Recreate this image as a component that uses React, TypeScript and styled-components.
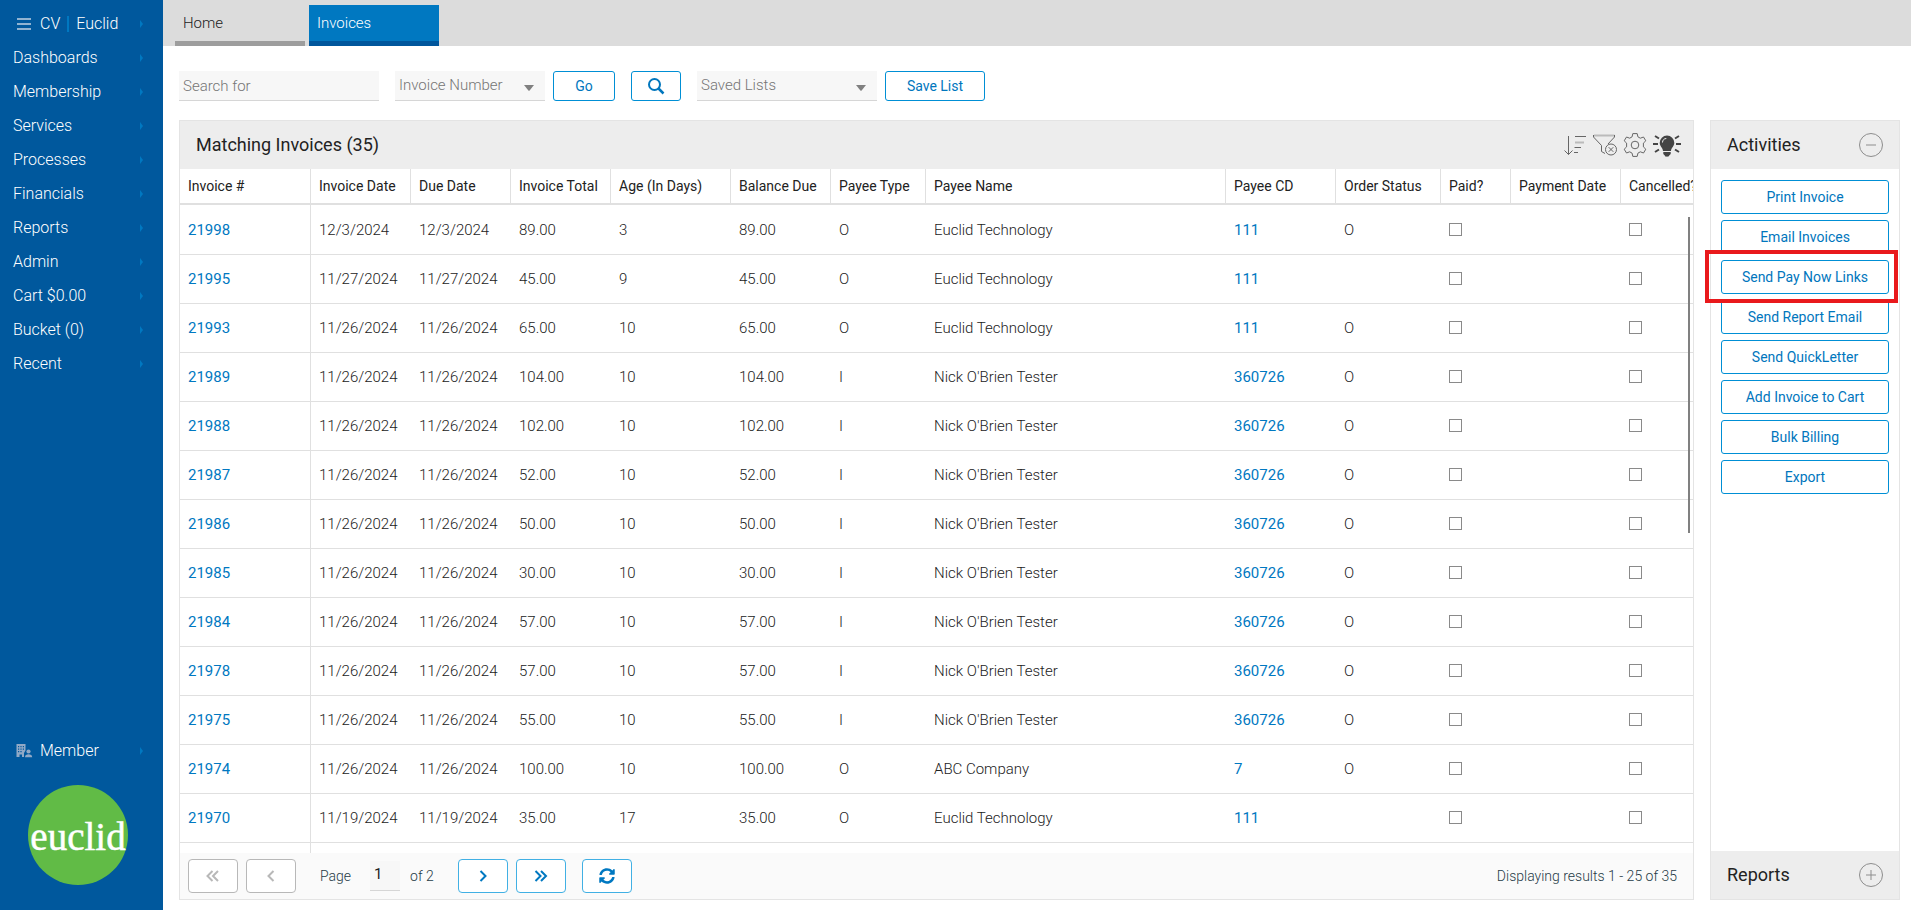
import React from "react";
import styled, { createGlobalStyle } from "styled-components";

const GlobalStyle = createGlobalStyle`
  *, *::before, *::after { box-sizing: border-box; }
  body {
    margin: 0;
    background: #fff;
    color: #222;
    font-family: Roboto, "Liberation Sans", sans-serif;
    font-size: 16px;
  }
  button, input, select { font-family: inherit; }
  a { text-decoration: none; }
`;

const Shell = styled.div`
  display: flex;
  height: 100vh;
`;

const Sidebar = styled.nav`
  flex: 0 0 163px;
  display: flex;
  flex-direction: column;
  background: #00589d;
  padding-top: 7px;
`;

const NavItem = styled.a<{ $icon?: boolean }>`
  display: flex;
  align-items: center;
  height: 34px;
  padding: 0 20px 0 ${(p) => (p.$icon ? 16 : 13)}px;
  color: #fff;
  font-size: 16px;
  font-weight: 300;
  line-height: 20px;
`;

const NavIcon = styled.span`
  display: flex;
  width: 24px;
`;

const Divider = styled.span`
  width: 2px;
  height: 16px;
  margin: 0 7px;
  background: #0078c1;
`;

const Arrow = styled.span`
  margin-left: auto;
  border: solid transparent;
  border-width: 4px 0 4px 3px;
  border-left-color: #0078c1;
`;

const SidebarFoot = styled.div`
  margin-top: auto;
  padding-bottom: 25px;
`;

const Logo = styled.svg`
  display: block;
  width: 100px;
  height: 100px;
  margin: 17px 0 0 28px;
`;

const Main = styled.div`
  flex: 1;
  min-width: 0;
  display: flex;
  flex-direction: column;
`;

const Tabs = styled.div`
  display: flex;
  gap: 4px;
  height: 46px;
  padding: 5px 12px 0;
  background: #dcdcdc;
`;

const Tab = styled.a<{ $active?: boolean }>`
  width: 130px;
  padding: 8px;
  border-bottom: 5px solid ${(p) => (p.$active ? "#00569c" : "#9d9d9d")};
  background: ${(p) => (p.$active ? "#0078c1" : "transparent")};
  color: ${(p) => (p.$active ? "#fff" : "#222")};
  font-size: 15px;
  font-weight: 300;
  line-height: 20px;
`;

const Toolbar = styled.form`
  display: flex;
  align-items: center;
  height: 74px;
  padding: 6px 16px 0;
`;

const Field = styled.input`
  width: 200px;
  height: 30px;
  padding: 0 4px;
  border: 0;
  border-bottom: 1px solid #d6d6d6;
  border-radius: 0;
  background: #f7f7f7;
  font-size: 15px;
  font-weight: 300;
  color: #222;
  &::placeholder { color: #757575; opacity: 1; }
`;

const SelectWrap = styled.label<{ $width: number }>`
  position: relative;
  width: ${(p) => p.$width}px;
  margin: 0 8px 0 16px;
  svg {
    position: absolute;
    right: 11px;
    top: 14px;
    pointer-events: none;
  }
`;

const Select = styled.select`
  display: block;
  appearance: none;
  width: 100%;
  height: 30px;
  padding: 0 24px 1px 4px;
  border: 0;
  border-bottom: 1px solid #d6d6d6;
  border-radius: 0;
  background: #f7f7f7;
  font-size: 15px;
  font-weight: 300;
  color: #757575;
`;

const Button = styled.button<{ $width?: number }>`
  display: flex;
  align-items: center;
  justify-content: center;
  width: ${(p) => (p.$width ? `${p.$width}px` : "100%")};
  height: 30px;
  padding: 0;
  border: 1px solid #008fd5;
  border-radius: 3px;
  background: #fff;
  color: #0076bd;
  font-size: 14px;
`;

const ButtonPair = styled.div`
  display: flex;
  gap: 16px;
`;

const Panels = styled.div`
  flex: 1;
  min-height: 0;
  display: flex;
  gap: 16px;
  padding: 0 11px 10px 16px;
`;

const Panel = styled.section<{ $width?: number }>`
  flex: ${(p) => (p.$width ? `0 0 ${p.$width}px` : "1")};
  min-width: 0;
  display: flex;
  flex-direction: column;
  border: 1px solid #e4e4e4;
`;

const PanelHead = styled.header<{ $end?: number }>`
  flex: none;
  display: flex;
  align-items: center;
  justify-content: space-between;
  height: 48px;
  padding: 0 ${(p) => p.$end ?? 16}px 0 16px;
  background: #ededed;
`;

const PanelTitle = styled.h2`
  margin: 0;
  font-size: 18px;
  font-weight: 400;
  line-height: 24px;
`;

const Tools = styled.div`
  display: flex;
  gap: 6px;
`;

const IconButton = styled.button`
  display: flex;
  padding: 0;
  border: 0;
  background: none;
  color: #4a4a4a;
`;

const GridFrame = styled.div`
  position: relative;
  flex: 1;
  min-height: 0;
`;

const GridScroll = styled.div`
  height: 100%;
  overflow: auto;
  scrollbar-width: none;
`;

const ScrollThumb = styled.div`
  position: absolute;
  top: 48px;
  right: 3px;
  width: 2px;
  height: 316px;
  background: #808080;
`;

const Grid = styled.table`
  width: 100%;
  min-width: 1541px;
  table-layout: fixed;
  border-collapse: separate;
  border-spacing: 0;
`;

const HeadCell = styled.th`
  position: sticky;
  top: 0;
  height: 36px;
  padding: 0 8px;
  border-right: 1px solid #e0e0e0;
  border-bottom: 2px solid #e0e0e0;
  background: #fff;
  font-size: 14px;
  font-weight: 400;
  text-align: left;
  white-space: nowrap;
`;

const Row = styled.tr`
  &:first-child td { height: 50px; padding-top: 1px; }
`;

const Cell = styled.td`
  height: 49px;
  padding: 0 8px;
  border-bottom: 1px solid #e0e0e0;
  font-size: 15px;
  font-weight: 300;
  white-space: nowrap;
  &:first-child { border-right: 1px solid #e0e0e0; }
`;

const CellLink = styled.a`
  color: #0078c1;
  font-weight: 400;
`;

const Check = styled.input`
  display: block;
  appearance: none;
  width: 13px;
  height: 13px;
  margin: 0 0 1px;
  border: 1px solid #8a8a8a;
  background: #fff;
`;

const Pager = styled.footer`
  flex: none;
  display: flex;
  align-items: center;
  height: 46px;
  padding: 0 16px 0 8px;
  background: #fafafa;
  color: #263b47;
  font-size: 14px;
  font-weight: 300;
`;

const PageButton = styled.button`
  display: flex;
  align-items: center;
  justify-content: center;
  width: 50px;
  height: 34px;
  margin-right: 8px;
  padding: 0;
  border: 1px solid #41b0e4;
  border-radius: 4px;
  background: #fff;
  color: #0078c1;
  &:disabled { border-color: #b8b8b8; color: #b8b8b8; }
`;

const PageBox = styled.label`
  display: flex;
  align-items: center;
  gap: 10px;
  width: 138px;
  margin: 0 0 0 16px;
`;

const PageInput = styled.input`
  width: 30px;
  height: 30px;
  margin-left: 9px;
  padding: 0 4px 4px;
  border: 0;
  border-bottom: 1px solid #d6d6d6;
  border-radius: 0;
  background: #f7f7f7;
  color: #222;
  font-size: 15px;
`;

const Refresh = styled.div`
  margin-left: 8px;
`;

const Summary = styled.span`
  margin-left: auto;
`;

const Activities = styled.div`
  flex: 1;
  display: flex;
  flex-direction: column;
  gap: 6px;
  padding: 11px 10px;
  button { height: 34px; flex: none; }
`;

const Highlight = styled.div`
  position: relative;
  &::after {
    content: "";
    position: absolute;
    z-index: 1;
    top: -10px;
    bottom: -9px;
    left: -16px;
    right: -9px;
    border: 4px solid #e9191c;
    pointer-events: none;
  }
`;

const MenuIcon = () => (
  <svg width="16" height="14" viewBox="0 0 16 14" stroke="#91b3d1" strokeWidth="2">
    <path d="M1 2h14M1 7h14M1 12h14" />
  </svg>
);

const MemberIcon = () => (
  <svg width="17" height="14" viewBox="0 0 17 14" fill="#91a9c6">
    <path
      fillRule="evenodd"
      d="M.5 0H9.500v6.500L8 9v4H6v-2.500H3.500V13H.5zM2 2v1.200h1.200V2zm2.400 0v1.200h1.200V2zm2.400 0v1.200H8V2zM2 4.500v1.200h1.200V4.500zm2.400 0v1.200h1.200V4.500zm2.400 0v1.200H8V4.500zM2 7v1.200h1.200V7zm2.400 0v1.200h1.200V7z"
    />
    <circle cx="12.500" cy="7.500" r="2.100" />
    <path d="M9 13.200c0-2 1.500-2.900 3.500-2.900s3.700.9 3.700 2.900z" />
  </svg>
);

const Caret = () => (
  <svg width="10" height="6" viewBox="0 0 10 6" fill="#808080">
    <path d="M0 0h10L5.600 5.500q-.6.6-1.200 0z" />
  </svg>
);

const SearchIcon = () => (
  <svg width="18" height="18" viewBox="0 0 18 18" fill="none" stroke="currentColor">
    <circle cx="7.500" cy="7.500" r="5.500" strokeWidth="2" />
    <path d="M11.500 11.500l5 5" strokeWidth="2.500" />
  </svg>
);

const SortIcon = () => (
  <svg width="24" height="24" viewBox="0 0 24 24" fill="none" stroke="#666">
    <path d="M5.500 3v18.500M1.500 17.500l4 4 4-4M12 3.500h11M11.500 14.500h6.500M11 19.500h4" />
    <path d="M12 9.500h9" stroke="#bbb" strokeWidth="2" />
  </svg>
);

const FilterIcon = () => (
  <svg width="24" height="24" viewBox="0 0 24 24" fill="none" stroke="#666">
    <path d="M1 2.500h20.500" stroke="#bbb" strokeWidth="2" />
    <path d="M.5 2v2l8 8.500v6l3.500 2M21.500 2v2L15 11" />
    <circle cx="18" cy="16.500" r="5.500" />
    <path d="M15.700 14.200l4.600 4.600M20.300 14.200l-4.600 4.600" />
  </svg>
);

const GearIcon = () => (
  <svg width="24" height="24" viewBox="0 0 24 24" fill="none" stroke="#666" strokeLinejoin="round">
    <circle cx="12" cy="12" r="3.800" />
    <path d="M9.800.6h4.400l.7 3.200 2.400 1.400 3.200-1.200 2.300 3.800-2.400 2.300v3.800l2.400 2.300-2.300 3.800-3.200-1.200-2.400 1.400-.7 3.200H9.800l-.7-3.200-2.400-1.400L3.500 20l-2.300-3.800 2.400-2.300v-3.800L1.200 7.800 3.500 4l3.200 1.200 2.400-1.400z" />
  </svg>
);

const BulbIcon = () => (
  <svg width="28" height="24" viewBox="0 0 28 24" fill="#444" stroke="#444">
    <path
      stroke="none"
      d="M14 2.500a7.300 7.300 0 0 1 7.300 7.300c0 3.500-3 5-3.300 8.200h-8c-.3-3.200-3.300-4.700-3.300-8.200A7.300 7.300 0 0 1 14 2.500zM10.300 19h7.400v2l-1.500 1.500c-.3 1.600-4.100 1.600-4.400 0L10.300 21z"
    />
    <path d="M9.500 9.500c0-2.300 1.500-4 3.800-4" fill="none" stroke="#ededed" />
    <path d="M0 11h5M28 11h-5M2 3l4 2.500M26 3l-4 2.500M2 19l4-2.500M26 19l-4-2.500" strokeWidth="2" />
  </svg>
);

const ToggleIcon = ({ plus }: { plus?: boolean }) => (
  <svg width="24" height="24" viewBox="0 0 24 24" fill="none" stroke="#8d8d8d">
    <circle cx="12" cy="12" r="11.500" />
    <path d={plus ? "M7 12h10M12 7v10" : "M7 12h10"} />
  </svg>
);

const Chevrons = ({ back, double }: { back?: boolean; double?: boolean }) => {
  const step = back ? "l-5 5 5 5" : "l5 5-5 5";
  const start = back ? 5 : 0;
  const shift = double ? 0 : 3;
  return (
    <svg width="14" height="14" viewBox="-1 0 14 14" fill="none" stroke="currentColor" strokeWidth="2">
      <path d={`M${start + shift + 0.5} 2${step}`} />
      {double && <path d={`M${start + 6} 2${step}`} />}
    </svg>
  );
};

const RefreshIcon = () => (
  <svg width="16" height="16" viewBox="0 0 512 512" fill="currentColor">
    <path d="M370.720 133.280C339.458 104.008 298.888 87.962 255.848 88c-77.458.068-144.328 53.178-162.791 126.850-1.344 5.363-6.122 9.150-11.651 9.150H24.103c-7.498 0-13.194-6.807-11.807-14.176C33.933 94.924 134.813 8 256 8c66.448 0 126.791 26.136 171.315 68.685L463.030 40.970C478.149 25.851 504 36.559 504 57.941V192c0 13.255-10.745 24-24 24H345.941c-21.382 0-32.090-25.851-16.971-40.971l41.750-41.749zM32 296h134.059c21.382 0 32.090 25.851 16.971 40.971l-41.750 41.750c31.262 29.273 71.835 45.319 114.876 45.280 77.418-.070 144.315-53.144 162.787-126.849 1.344-5.363 6.122-9.150 11.651-9.150h57.304c7.498 0 13.194 6.807 11.807 14.176C478.067 417.076 377.187 504 256 504c-66.448 0-126.791-26.136-171.315-68.685L48.970 471.030C33.851 486.149 8 475.441 8 454.059V320c0-13.255 10.745-24 24-24z" />
  </svg>
);

const navItems = [
  "Dashboards", "Membership", "Services", "Processes", "Financials",
  "Reports", "Admin", "Cart $0.00", "Bucket (0)", "Recent",
];

const columns: [string, number | undefined][] = [
  ["Invoice #", 131],
  ["Invoice Date", 100],
  ["Due Date", 100],
  ["Invoice Total", 100],
  ["Age (In Days)", 120],
  ["Balance Due", 100],
  ["Payee Type", 95],
  ["Payee Name", 300],
  ["Payee CD", 110],
  ["Order Status", 105],
  ["Paid?", 70],
  ["Payment Date", 110],
  ["Cancelled?", undefined],
];

type Invoice = {
  id: string; date: string; total: string; age: string;
  type: string; name: string; cd: string; status: string;
};

const inv = (
  id: string, date: string, total: string, age: string,
  type: string, name: string, cd: string, status: string
): Invoice => ({ id, date, total, age, type, name, cd, status });

const invoices: Invoice[] = [
  inv("21998", "12/3/2024", "89.00", "3", "O", "Euclid Technology", "111", "O"),
  inv("21995", "11/27/2024", "45.00", "9", "O", "Euclid Technology", "111", ""),
  inv("21993", "11/26/2024", "65.00", "10", "O", "Euclid Technology", "111", "O"),
  inv("21989", "11/26/2024", "104.00", "10", "I", "Nick O'Brien Tester", "360726", "O"),
  inv("21988", "11/26/2024", "102.00", "10", "I", "Nick O'Brien Tester", "360726", "O"),
  inv("21987", "11/26/2024", "52.00", "10", "I", "Nick O'Brien Tester", "360726", "O"),
  inv("21986", "11/26/2024", "50.00", "10", "I", "Nick O'Brien Tester", "360726", "O"),
  inv("21985", "11/26/2024", "30.00", "10", "I", "Nick O'Brien Tester", "360726", "O"),
  inv("21984", "11/26/2024", "57.00", "10", "I", "Nick O'Brien Tester", "360726", "O"),
  inv("21978", "11/26/2024", "57.00", "10", "I", "Nick O'Brien Tester", "360726", "O"),
  inv("21975", "11/26/2024", "55.00", "10", "I", "Nick O'Brien Tester", "360726", "O"),
  inv("21974", "11/26/2024", "100.00", "10", "O", "ABC Company", "7", "O"),
  inv("21970", "11/19/2024", "35.00", "17", "O", "Euclid Technology", "111", ""),
];

const activities = [
  "Print Invoice", "Email Invoices", "Send Pay Now Links", "Send Report Email",
  "Send QuickLetter", "Add Invoice to Cart", "Bulk Billing", "Export",
];

export default function App() {
  return (
    <>
      <GlobalStyle />
      <Shell>
        <Sidebar>
          <NavItem href="#" $icon>
            <NavIcon><MenuIcon /></NavIcon>
            CV
            <Divider />
            Euclid
            <Arrow />
          </NavItem>
          {navItems.map((label) => (
            <NavItem href="#" key={label}>{label}<Arrow /></NavItem>
          ))}
          <SidebarFoot>
            <NavItem href="#" $icon>
              <NavIcon><MemberIcon /></NavIcon>
              Member
              <Arrow />
            </NavItem>
            <Logo viewBox="0 0 100 100">
              <circle cx="50" cy="50" r="50" fill="#61bb46" />
              <text x="50" y="65" textAnchor="middle" fill="#fff" stroke="#fff" strokeWidth="0.5" fontFamily="'Liberation Serif', serif" fontSize="39">
                euclid
              </text>
            </Logo>
          </SidebarFoot>
        </Sidebar>

        <Main>
          <Tabs>
            <Tab href="#">Home</Tab>
            <Tab href="#" $active>Invoices</Tab>
          </Tabs>

          <Toolbar onSubmit={(e) => e.preventDefault()}>
            <Field aria-label="Search for" placeholder="Search for" />
            <SelectWrap $width={150}>
              <Select aria-label="Search field"><option>Invoice Number</option></Select>
              <Caret />
            </SelectWrap>
            <ButtonPair>
              <Button type="submit" $width={62}>Go</Button>
              <Button type="button" $width={50} aria-label="Search"><SearchIcon /></Button>
            </ButtonPair>
            <SelectWrap $width={180}>
              <Select aria-label="Saved lists"><option>Saved Lists</option></Select>
              <Caret />
            </SelectWrap>
            <Button type="button" $width={100}>Save List</Button>
          </Toolbar>

          <Panels>
            <Panel>
              <PanelHead $end={12}>
                <PanelTitle>Matching Invoices (35)</PanelTitle>
                <Tools>
                  <IconButton aria-label="Sort"><SortIcon /></IconButton>
                  <IconButton aria-label="Clear filter"><FilterIcon /></IconButton>
                  <IconButton aria-label="Settings"><GearIcon /></IconButton>
                  <IconButton aria-label="Tips"><BulbIcon /></IconButton>
                </Tools>
              </PanelHead>
              <GridFrame>
                <GridScroll>
                  <Grid>
                    <colgroup>
                      {columns.map(([label, width]) => <col key={label} width={width} />)}
                    </colgroup>
                    <thead>
                      <tr>{columns.map(([label]) => <HeadCell key={label}>{label}</HeadCell>)}</tr>
                    </thead>
                    <tbody>
                      {invoices.map((r) => (
                        <Row key={r.id}>
                          <Cell><CellLink href="#">{r.id}</CellLink></Cell>
                          <Cell>{r.date}</Cell>
                          <Cell>{r.date}</Cell>
                          <Cell>{r.total}</Cell>
                          <Cell>{r.age}</Cell>
                          <Cell>{r.total}</Cell>
                          <Cell>{r.type}</Cell>
                          <Cell>{r.name}</Cell>
                          <Cell><CellLink href="#">{r.cd}</CellLink></Cell>
                          <Cell>{r.status}</Cell>
                          <Cell><Check type="checkbox" aria-label={`Invoice ${r.id} paid`} /></Cell>
                          <Cell />
                          <Cell><Check type="checkbox" aria-label={`Invoice ${r.id} cancelled`} /></Cell>
                        </Row>
                      ))}
                      <Row>{columns.map(([label]) => <Cell key={label} />)}</Row>
                    </tbody>
                  </Grid>
                </GridScroll>
                <ScrollThumb />
              </GridFrame>
              <Pager>
                <PageButton disabled aria-label="First page"><Chevrons back double /></PageButton>
                <PageButton disabled aria-label="Previous page"><Chevrons back /></PageButton>
                <PageBox>
                  Page
                  <PageInput defaultValue="1" />
                  of 2
                </PageBox>
                <PageButton aria-label="Next page"><Chevrons /></PageButton>
                <PageButton aria-label="Last page"><Chevrons double /></PageButton>
                <Refresh>
                  <PageButton aria-label="Refresh"><RefreshIcon /></PageButton>
                </Refresh>
                <Summary>Displaying results 1 - 25 of 35</Summary>
              </Pager>
            </Panel>

            <Panel $width={190}>
              <PanelHead>
                <PanelTitle>Activities</PanelTitle>
                <IconButton aria-label="Collapse activities"><ToggleIcon /></IconButton>
              </PanelHead>
              <Activities>
                {activities.map((label) =>
                  label === "Send Pay Now Links" ? (
                    <Highlight key={label}><Button>{label}</Button></Highlight>
                  ) : (
                    <Button key={label}>{label}</Button>
                  )
                )}
              </Activities>
              <PanelHead>
                <PanelTitle>Reports</PanelTitle>
                <IconButton aria-label="Expand reports"><ToggleIcon plus /></IconButton>
              </PanelHead>
            </Panel>
          </Panels>
        </Main>
      </Shell>
    </>
  );
}
